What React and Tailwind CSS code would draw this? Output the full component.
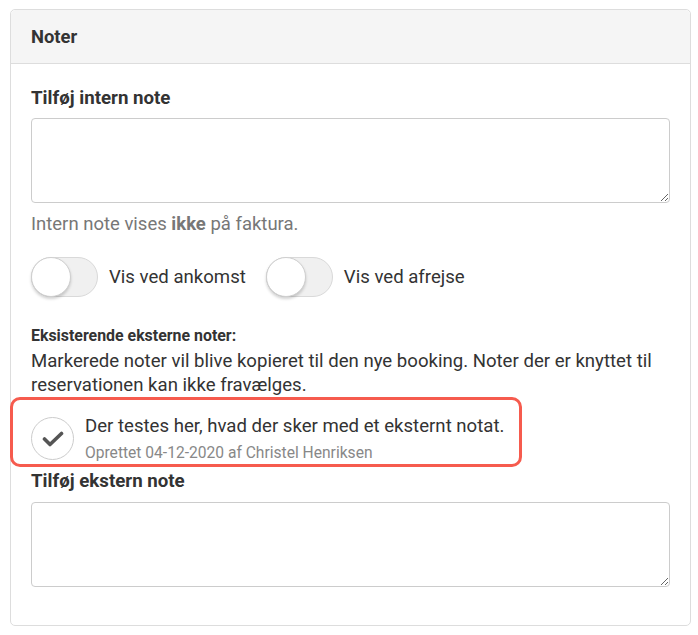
import React from 'react'

const Toggle = ({ label }) => (
  <label className="flex items-center gap-[11px]">
    <span className="relative block w-[67px] h-[40px] rounded-full bg-[#f0f0f0] border border-[#d9d9d9]">
      <span className="absolute -left-px -top-px w-[40px] h-[40px] rounded-full bg-white border border-[#cfcfcf] shadow-[0_2px_3px_rgba(0,0,0,0.18)]" />
    </span>
    <span className="text-[18.6px] leading-[24px] text-[#333]">{label}</span>
  </label>
)

const CheckIcon = () => (
  <svg width="22" height="16" viewBox="0 0 22 16" fill="none">
    <path d="M2.5 8 L8 13.5 L19.5 2.5" stroke="#555" strokeWidth="3.6" strokeLinecap="round" strokeLinejoin="round" />
  </svg>
)

export default function App() {
  return (
    <div className="pl-[10px] pt-[9px] pr-[7px] font-['Roboto',sans-serif] text-[#333]">
      <div className="w-[681px] border border-[#ddd] rounded-[5px] bg-white">
        {/* Header */}
        <div className="h-[54px] flex items-center px-5 bg-[#f5f5f5] border-b border-[#ddd] rounded-t-[5px]">
          <h3 className="text-[18.4px] font-bold">Noter</h3>
        </div>

        <div className="px-5 pt-[22px] pb-[38px]">
          {/* Intern note */}
          <div className="text-[18.7px] leading-[24px] font-bold">Tilføj intern note</div>
          <textarea className="mt-[8px] block w-full h-[85px] border border-[#ccc] rounded-[4px] bg-white" />
          <p className="mt-[9px] text-[18.5px] leading-[24px] text-[#777]">
            Intern note vises <b className="font-bold">ikke</b> på faktura.
          </p>

          {/* Toggles */}
          <div className="mt-[21px] flex items-center gap-[20px]">
            <Toggle label="Vis ved ankomst" />
            <Toggle label="Vis ved afrejse" />
          </div>

          {/* Eksisterende noter */}
          <div className="mt-[29px] text-[15.9px] leading-[20px] font-bold">Eksisterende eksterne noter:</div>
          <p className="mt-[3px] text-[18.6px] leading-[24px]">
            Markerede noter vil blive kopieret til den nye booking. Noter der er knyttet til reservationen kan ikke fravælges.
          </p>

          <div className="relative pt-[17px] pb-[6px]">
            <div className="flex items-center gap-[11px]">
              <span className="w-[43px] h-[43px] shrink-0 rounded-full border border-[#ccc] bg-white flex items-center justify-center">
                <CheckIcon />
              </span>
              <div>
                <div className="text-[18.6px] leading-[24px]">Der testes her, hvad der sker med et eksternt notat.</div>
                <div className="mt-[5px] text-[15.6px] leading-[20px] text-[#888]">Oprettet 04-12-2020 af Christel Henriksen</div>
              </div>
            </div>
            {/* highlight annotation */}
            <div className="absolute left-[-21px] top-[0px] w-[512px] h-[70px] border-[3px] border-[#f65b4e] rounded-[10px] pointer-events-none" />
          </div>

          {/* Ekstern note */}
          <div className="text-[18.7px] leading-[24px] font-bold">Tilføj ekstern note</div>
          <textarea className="mt-[9px] block w-full h-[85px] border border-[#ccc] rounded-[4px] bg-white" />
        </div>
      </div>
    </div>
  )
}
